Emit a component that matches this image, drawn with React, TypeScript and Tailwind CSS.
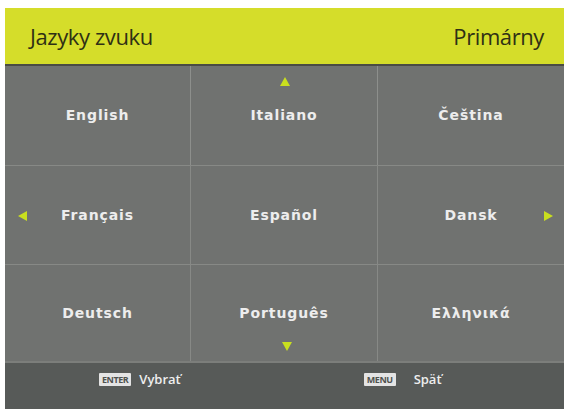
import React from 'react';

const cells = [
  'English', 'Italiano', 'Čeština',
  'Français', 'Español', 'Dansk',
  'Deutsch', 'Português', 'Ελληνικά',
];

function Arrow({ dir }: { dir: 'up' | 'down' | 'left' | 'right' }) {
  const pts = {
    up: '6,1 11,10 1,10',
    down: '1,1 11,1 6,10',
    left: '1,6 10,1 10,11',
    right: '1,1 10,6 1,11',
  }[dir];
  return (
    <svg width="12" height="12" viewBox="0 0 12 12">
      <polygon points={pts} fill="#c9df1f" />
    </svg>
  );
}

function Key({ label }: { label: string }) {
  return (
    <span className="inline-flex items-center justify-center h-[13px] px-[3px] bg-[#e4e4e4] text-[#50524f] text-[9px] font-bold leading-none tracking-tighter rounded-[1px]">
      {label}
    </span>
  );
}

export default function App() {
  return (
    <div className="w-[564px] h-[409px] bg-white pt-[8px] pl-[5px] overflow-hidden">
      <div className="flex flex-col h-[401px] w-[559px]" style={{ fontFamily: '"DejaVu Sans", sans-serif' }}>
        {/* header */}
        <div className="h-[58px] bg-[#d5dd2a] flex items-center justify-between pl-[25px] pr-[20px] border-b-2 border-[#4a4c44]">
          <span className="text-[22px] font-medium text-[#2f3015] tracking-[-0.4px]" style={{ fontFamily: '"Open Sans", sans-serif' }}>Jazyky zvuku</span>
          <span className="text-[22px] font-medium text-[#2f3015] tracking-[-0.4px]" style={{ fontFamily: '"Open Sans", sans-serif' }}>Primárny</span>
        </div>

        {/* grid */}
        <div className="grid grid-cols-[185px_187px_1fr] grid-rows-[99px_99px_97px] bg-[#707270]">
          {cells.map((c, i) => {
            const col = i % 3;
            const row = Math.floor(i / 3);
            return (
              <div
                key={c}
                className={`relative flex items-center justify-center ${col > 0 ? 'border-l border-[#8d8f8c]' : ''} ${row > 0 ? 'border-t border-[#878986]' : ''}`}
              >
                <span className="text-[14px] font-bold tracking-[0.9px] text-[#ededed]">{c}</span>
                {i === 1 && (
                  <div className="absolute top-[10px] left-1/2 -translate-x-[5px]"><Arrow dir="up" /></div>
                )}
                {i === 7 && (
                  <div className="absolute bottom-[8px] left-1/2 -translate-x-[3px]"><Arrow dir="down" /></div>
                )}
                {i === 3 && (
                  <div className="absolute left-[12px] top-1/2 -translate-y-[5px]"><Arrow dir="left" /></div>
                )}
                {i === 5 && (
                  <div className="absolute right-[9px] top-1/2 -translate-y-[5px]"><Arrow dir="right" /></div>
                )}
              </div>
            );
          })}
        </div>

        {/* footer */}
        <div className="flex-1 bg-[#575a58] border-t-2 border-[#7c7e7b] flex items-start pt-[7px] text-[13px] text-[#eeeeee]" style={{ fontFamily: '"Open Sans", sans-serif' }}>
          <div className="flex items-center gap-[8px] ml-[94px]">
            <Key label="ENTER" />
            <span className="font-semibold">Vybrať</span>
          </div>
          <div className="flex items-center gap-[18px] ml-[183px]">
            <Key label="MENU" />
            <span className="font-semibold">Späť</span>
          </div>
        </div>
      </div>
    </div>
  );
}
